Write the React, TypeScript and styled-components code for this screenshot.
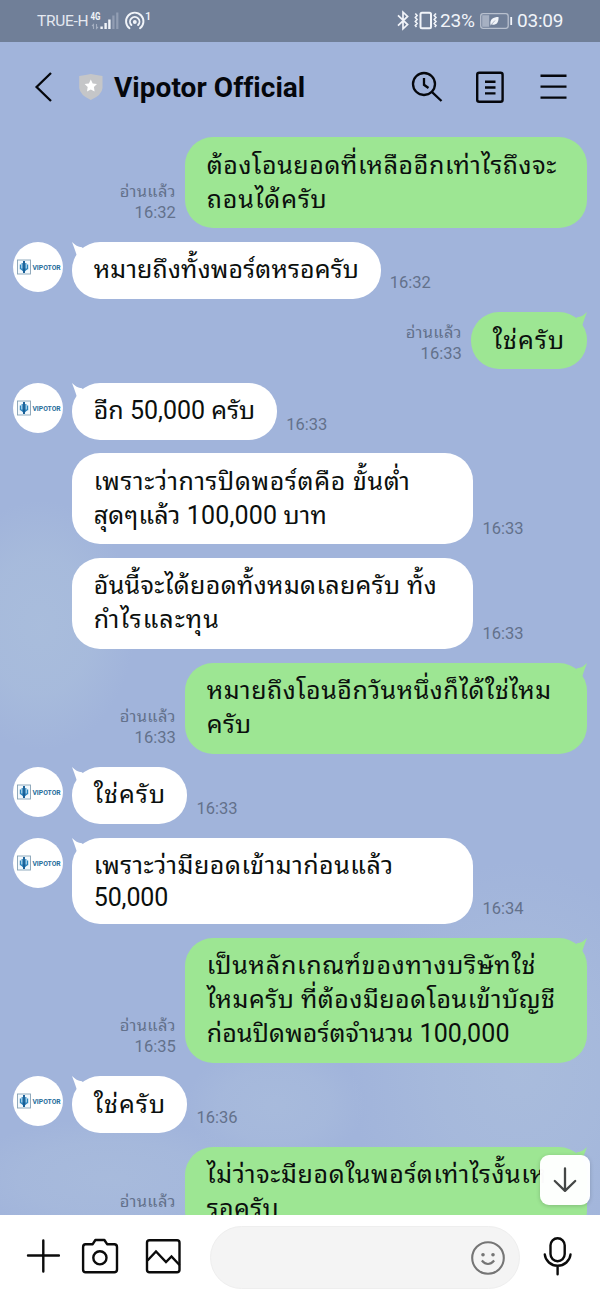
import React from 'react';
import styled, { createGlobalStyle } from 'styled-components';

const FONT =
  "Roboto, 'Noto Sans Thai Looped', 'Noto Looped Thai', 'Droid Sans Thai', Loma, Waree, Garuda, Umpush, Laksaman, sans-serif";

const GlobalStyle = createGlobalStyle`
  * { box-sizing: border-box; }
  body { margin: 0; font-family: ${FONT}; }
`;

const Screen = styled.div`
  display: flex;
  flex-direction: column;
  width: 600px;
  height: 1300px;
  overflow: hidden;
  background:
    radial-gradient(ellipse 95px 125px at 40px 625px, rgba(169, 189, 220, 0.95), rgba(169, 189, 220, 0.7) 55%, rgba(169, 189, 220, 0) 100%),
    radial-gradient(ellipse 90px 60px at 275px 1105px, rgba(168, 187, 220, 0.9), rgba(168, 187, 220, 0.6) 60%, rgba(168, 187, 220, 0) 100%),
    radial-gradient(ellipse 170px 210px at 520px 1070px, rgba(169, 188, 220, 0.95), rgba(169, 188, 220, 0.6) 50%, rgba(169, 188, 220, 0) 100%),
    radial-gradient(ellipse 150px 60px at 110px 1178px, rgba(168, 187, 220, 0.9), rgba(168, 187, 220, 0.6) 60%, rgba(168, 187, 220, 0) 100%),
    #a1b4db;
`;

const StatusBar = styled.div`
  display: flex;
  align-items: center;
  justify-content: space-between;
  flex: none;
  height: 42px;
  padding: 0 36px 1px 37px;
  background: #707f98;
  color: #f1f4f9;
`;

const StatusGroup = styled.div`
  display: flex;
  align-items: center;
`;

const Carrier = styled.span`
  width: 52px;
  font-size: 15.5px;
  letter-spacing: -0.3px;
  white-space: nowrap;
  color: #e4e8f0;
`;

const StatusText = styled.span<{ $w: number }>`
  width: ${(p) => p.$w}px;
  font-size: 19px;
  letter-spacing: -0.2px;
  white-space: nowrap;
`;

const Header = styled.header`
  display: flex;
  align-items: center;
  flex: none;
  height: 95px;
  padding: 0 32px 5px 34px;
`;

const BackIcon = styled.svg`
  flex: none;
`;

const ShieldIcon = styled.svg`
  flex: none;
  margin-left: 24px;
`;

const Title = styled.h1`
  flex: 1;
  margin: 1px 0 0 10px;
  font-size: 28px;
  line-height: 34px;
  font-weight: 700;
  letter-spacing: 0.05px;
  white-space: nowrap;
  color: #05070c;
`;

const HeaderActions = styled.div`
  display: flex;
  align-items: center;
  gap: 33px;
`;

const Messages = styled.main`
  position: relative;
  display: flex;
  flex-direction: column;
  gap: 13.57px;
  flex: 1;
  min-height: 0;
  padding: 0.3px 13.5px 0 13px;
  overflow: hidden;
`;

const Row = styled.div<{ $mine?: boolean }>`
  display: flex;
  flex: none;
  justify-content: ${(p) => (p.$mine ? 'flex-end' : 'flex-start')};
`;

const AvatarSlot = styled.div`
  flex: none;
  width: 58.7px;
`;

const Avatar = styled.div`
  display: flex;
  align-items: center;
  justify-content: center;
  width: 50px;
  height: 50px;
  border-radius: 50%;
  background: #fff;
`;

const Logo = styled.svg`
  flex: none;
  overflow: visible;
`;

const Bubble = styled.div<{ $mine?: boolean; $w: number }>`
  position: relative;
  flex: none;
  width: ${(p) => p.$w}px;
  padding: 11.3px 0 11.7px 22px;
  border-radius: 28px;
  background: ${(p) => (p.$mine ? '#9de693' : '#fff')};
`;

const Tail = styled.svg<{ $mine?: boolean }>`
  position: absolute;
  top: 0;
  ${(p) => (p.$mine ? 'right: 0; transform: scaleX(-1);' : 'left: 0;')}
`;

const Line = styled.div<{ $h: number; $ls: number }>`
  height: ${(p) => p.$h}px;
  line-height: ${(p) => p.$h}px;
  font-size: 25px;
  letter-spacing: ${(p) => p.$ls}px;
  white-space: nowrap;
  color: #0b0f0d;
`;

const Meta = styled.div<{ $mine?: boolean }>`
  align-self: flex-end;
  margin: ${(p) => (p.$mine ? '0 9px 5.4px 0' : '0 0 5.4px 9px')};
  text-align: right;
  font-size: 16.5px;
  line-height: 21px;
  white-space: nowrap;
  color: #63718b;
`;

const ReadLabel = styled.div`
  height: 21px;
  font-size: 16.5px;
  letter-spacing: 0.3px;
`;

const ScrollDown = styled.button`
  position: absolute;
  right: 10px;
  bottom: 10px;
  display: flex;
  align-items: center;
  justify-content: center;
  width: 50px;
  height: 50px;
  padding: 0;
  border: 0;
  border-radius: 9px;
  background: rgba(255, 255, 255, 0.98);
  box-shadow: 0 1px 4px rgba(0, 0, 0, 0.18);
`;

const Composer = styled.footer`
  display: flex;
  align-items: flex-start;
  flex: none;
  height: 85px;
  padding: 11px 0 0 26px;
  background: #fff;
`;

const ComposerIcons = styled.div`
  display: flex;
  align-items: center;
  gap: 21px;
  height: 60px;
  width: 184px;
`;

const GalleryIcon = styled.svg`
  margin-left: 5px;
`;

const InputPill = styled.div`
  display: flex;
  align-items: center;
  justify-content: flex-end;
  width: 310px;
  height: 63px;
  padding-right: 14px;
  border: 1px solid #eeeeee;
  border-radius: 32px;
  background: #f4f4f4;
`;

const MicButton = styled.div`
  display: flex;
  margin: 10px 0 0 22px;
`;

function BrandAvatar() {
  return (
    <Avatar>
      <Logo width="48" height="20" viewBox="-1 -1 48 20">
        <rect x="2.5" y="2" width="13" height="14" fill="#f3f9fd" stroke="#86a2b6" strokeWidth="0.9" />
        <path d="M5.4 6.6v4.6M7.2 5v7M10.8 5v7M12.6 6.600v4.600" stroke="#2a86bf" strokeWidth="1.200" />
        <path d="M4.900 10.500h8.200L9 14.200z" fill="#2a7fb8" />
        <path d="M9 3v12" stroke="#155c94" strokeWidth="1.900" />
        <text x="17.400" y="11.900" fontFamily="Roboto, sans-serif" fontWeight="700" fontSize="7.700" textLength="28.300" lengthAdjust="spacingAndGlyphs" fill="#276d9b">
          VIPOTOR
        </text>
      </Logo>
    </Avatar>
  );
}

type TextLine = { t: string; ls?: number; h?: number };
type Message = {
  mine?: boolean;
  avatar?: boolean;
  tail?: boolean;
  w: number;
  time: string;
  lines: TextLine[];
};

const WIDE = 401.8;

const messages: Message[] = [
  {
    mine: true, w: WIDE, time: '16:32',
    lines: [{ t: 'ต้องโอนยอดที่เหลืออีกเท่าไรถึงจะ', ls: 0.6 }, { t: 'ถอนได้ครับ', ls: 0.85 }],
  },
  { avatar: true, tail: true, w: 309, time: '16:32', lines: [{ t: 'หมายถึงทั้งพอร์ตหรอครับ', ls: 0.17 }] },
  { mine: true, tail: true, w: 115.8, time: '16:33', lines: [{ t: 'ใช่ครับ', ls: 1.1 }] },
  { avatar: true, tail: true, w: 205.5, time: '16:33', lines: [{ t: 'อีก 50,000 ครับ' }] },
  {
    w: WIDE, time: '16:33',
    lines: [{ t: 'เพราะว่าการปิดพอร์ตคือ ขั้นต่ำ', ls: 0.68 }, { t: 'สุดๆแล้ว 100,000 บาท', ls: 0.16 }],
  },
  {
    w: WIDE, time: '16:33',
    lines: [{ t: 'อันนี้จะได้ยอดทั้งหมดเลยครับ ทั้ง', ls: 0.35 }, { t: 'กำไรและทุน', ls: 1.05 }],
  },
  {
    mine: true, tail: true, w: WIDE, time: '16:33',
    lines: [{ t: 'หมายถึงโอนอีกวันหนึ่งก็ได้ใช่ไหม', ls: 0.52 }, { t: 'ครับ', ls: 0.3 }],
  },
  { avatar: true, tail: true, w: 115.8, time: '16:33', lines: [{ t: 'ใช่ครับ', ls: 1.1 }] },
  {
    avatar: true, tail: true, w: WIDE, time: '16:34',
    lines: [{ t: 'เพราะว่ามียอดเข้ามาก่อนแล้ว', ls: 0.52 }, { t: '50,000', ls: -0.1, h: 29.6 }],
  },
  {
    mine: true, tail: true, w: WIDE, time: '16:35',
    lines: [
      { t: 'เป็นหลักเกณฑ์ของทางบริษัทใช่', ls: 0.74 },
      { t: 'ไหมครับ ที่ต้องมียอดโอนเข้าบัญชี', ls: 0.5 },
      { t: 'ก่อนปิดพอร์ตจำนวน 100,000', ls: 0.14 },
    ],
  },
  { avatar: true, tail: true, w: 115.8, time: '16:36', lines: [{ t: 'ใช่ครับ', ls: 1.1 }] },
  {
    mine: true, tail: true, w: WIDE, time: '16:36',
    lines: [{ t: 'ไม่ว่าจะมียอดในพอร์ตเท่าไรงั้นเห', ls: 0.63 }, { t: 'รอครับ', ls: 0.4 }],
  },
];

function MessageRow({ m }: { m: Message }) {
  const bubble = (
    <Bubble $mine={m.mine} $w={m.w}>
      {m.tail && (
        <Tail $mine={m.mine} width="28" height="22" viewBox="0 0 28 22">
          <path d="M0 0C3 3 6 5.2 10 5.2L14 10L5 14L4.5 12.5C3 8 1.5 4 0 0Z" fill={m.mine ? '#9de693' : '#fff'} />
        </Tail>
      )}
      {m.lines.map((l) => (
        <Line key={l.t} $h={l.h ?? 34} $ls={l.ls ?? 0}>{l.t}</Line>
      ))}
    </Bubble>
  );
  const meta = (
    <Meta $mine={m.mine}>
      {m.mine && <ReadLabel>อ่านแล้ว</ReadLabel>}
      {m.time}
    </Meta>
  );
  return m.mine ? (
    <Row $mine>{meta}{bubble}</Row>
  ) : (
    <Row><AvatarSlot>{m.avatar && <BrandAvatar />}</AvatarSlot>{bubble}{meta}</Row>
  );
}

function StatusIconsLeft() {
  return (
    <svg width="64" height="26" viewBox="89 8 64 26" fill="none">
      <text x="90.5" y="20.3" fontFamily="Roboto, sans-serif" fontSize="10.5" fontWeight="700" textLength="10" lengthAdjust="spacingAndGlyphs" fill="#f1f4f9">4G</text>
      <path d="M93.5 29v-4.5l-1.5 1.5M96.5 24v4.5l1.5-1.5" stroke="#a5afc1" strokeWidth="1.1" />
      <path d="M101.6 29v-2.5M105.6 29v-6M109.4 29v-9.5" stroke="#f1f4f9" strokeWidth="2.4" />
      <path d="M113.4 29V15.5M117.3 29V12.5" stroke="#929eb3" strokeWidth="2.2" />
      <g stroke="#f1f4f9" strokeWidth="1.9" strokeLinecap="round">
        <path d="M129.5 28.3A8.7 8.7 0 1 1 140 28.3" />
        <path d="M131.4 25A4.7 4.7 0 1 1 138.1 25" />
        <circle cx="134.8" cy="22" r="1" fill="#f1f4f9" />
      </g>
      <text x="145" y="20" fontFamily="Roboto, sans-serif" fontSize="11" fontWeight="500" fill="#f1f4f9">1</text>
    </svg>
  );
}

function StatusIconsRight() {
  return (
    <svg width="44" height="26" viewBox="396 8 44 26" fill="none" stroke="#f1f4f9">
      <path d="M398 15.3l9.6 9.3-4.6 4.2V12.2l4.6 4.2-9.6 9.3" strokeWidth="1.7" />
      <rect x="420.5" y="12.8" width="10.5" height="15.4" rx="1.5" strokeWidth="2" />
      <path d="M415.3 13.5l1.8 2-1.8 2 1.8 2-1.8 2 1.8 2-1.8 2 1.2 1.4M436 13.5l-1.8 2 1.8 2-1.8 2 1.8 2-1.8 2 1.8 2-1.2 1.4" strokeWidth="1.6" />
    </svg>
  );
}

function Battery() {
  return (
    <svg width="38" height="26" viewBox="479 8 38 26" fill="none">
      <rect x="480.7" y="13.7" width="27.5" height="14.6" rx="2.5" stroke="#b8c0ce" strokeWidth="1.3" />
      <rect x="482.2" y="15.2" width="7" height="11.6" fill="#a6b0c2" />
      <path d="M490.5 25c-1-6 3-8 8-8 .5 5-2 8.5-6 7.5z" fill="#f1f4f9" />
      <path d="M490 26l5-5.5" stroke="#8c98ad" strokeWidth="0.7" />
      <path d="M511.2 17v8" stroke="#f1f4f9" strokeWidth="1.8" />
    </svg>
  );
}

export default function App() {
  return (
    <Screen lang="th">
      <GlobalStyle />
      <StatusBar>
        <StatusGroup>
          <Carrier>TRUE-H</Carrier>
          <StatusIconsLeft />
        </StatusGroup>
        <StatusGroup>
          <StatusIconsRight />
          <StatusText $w={39}>23%</StatusText>
          <Battery />
          <StatusText $w={47}>03:09</StatusText>
        </StatusGroup>
      </StatusBar>
      <Header>
        <BackIcon width="20" height="32" viewBox="0 0 20 32" fill="none" stroke="#05070c" strokeWidth="2.3">
          <path d="M17 2L2.6 16L17 30" />
        </BackIcon>
        <ShieldIcon width="26" height="28" viewBox="0 0 26 28">
          <path d="M1.2 3Q8 2 12.8 1Q18 2 24.5 3V15Q24 22 12.8 27Q2 22 1.2 15Z" fill="#c5c6c8" />
          <path d="M12.8 6.6l1.9 3.9 4.3.6-3.1 3 .7 4.3-3.8-2-3.8 2 .7-4.3-3.1-3 4.3-.6z" fill="#fff" />
        </ShieldIcon>
        <Title>Vipotor Official</Title>
        <HeaderActions>
          <svg width="32" height="32" viewBox="411 71 32 32" fill="none" stroke="#05070c" strokeWidth="2.3">
            <circle cx="424" cy="84" r="11" />
            <path d="M431.8 91.8L441.5 101M424 78v6.8l4.5 3.2" />
          </svg>
          <svg width="31" height="32" viewBox="476 70 31 32" fill="none" stroke="#05070c" strokeWidth="2.4">
            <rect x="477.2" y="71.8" width="25.4" height="29" rx="2" />
            <path d="M485 80.7h10.5M485 86.5h10.5M485 92.4h10.5" />
          </svg>
          <svg width="28" height="28" viewBox="540 73 28 28" fill="none" stroke="#05070c" strokeWidth="2.4">
            <path d="M540.5 75.7h26M540.5 86.6h26M540.5 97.6h26" />
          </svg>
        </HeaderActions>
      </Header>
      <Messages>
        {messages.map((m, i) => (
          <MessageRow key={i} m={m} />
        ))}
        <ScrollDown aria-label="Scroll to latest">
          <svg width="26" height="28" viewBox="0 0 26 28" fill="none" stroke="#444746" strokeWidth="2.3" strokeLinecap="round" strokeLinejoin="round">
            <path d="M13 2.5v22M2.8 15l10.2 9.8L23.2 15" />
          </svg>
        </ScrollDown>
      </Messages>
      <Composer>
        <ComposerIcons>
          <svg width="34" height="34" viewBox="0 0 34 34" stroke="#0b0b0b" strokeWidth="2.4" strokeLinecap="round">
            <path d="M2 16.5h31M17.3 1.5v31" />
          </svg>
          <svg width="38" height="36" viewBox="81 1237 38 36" fill="none" stroke="#0b0b0b" strokeWidth="2.4" strokeLinejoin="round">
            <path d="M85.5 1243.2h7.2l2.7-4.2h9l2.7 4.2h7.2q2.7 0 2.7 2.7v22.6q0 2.7-2.7 2.7h-28.8q-2.4 0-2.4-2.7v-22.6q0-2.7 2.4-2.7z" />
            <circle cx="99.9" cy="1256.8" r="6.6" />
          </svg>
          <GalleryIcon width="36" height="36" viewBox="145 1237 36 36" fill="none" stroke="#0b0b0b" strokeWidth="2.4">
            <rect x="147" y="1239.2" width="32.5" height="32" rx="2.5" />
            <path d="M147.5 1259.5L156 1250.5L166 1261L171.5 1255.5L179.5 1264" />
          </GalleryIcon>
        </ComposerIcons>
        <InputPill>
          <svg width="34" height="34" viewBox="0 0 34 34" fill="none" stroke="#757575" strokeWidth="2.1">
            <circle cx="17" cy="17" r="15.8" />
            <circle cx="12" cy="13.8" r="1.8" fill="#757575" stroke="none" />
            <circle cx="22" cy="13.8" r="1.8" fill="#757575" stroke="none" />
            <path d="M10.8 19.5Q17 26.5 23.2 19.5" />
          </svg>
        </InputPill>
        <MicButton>
          <svg width="32" height="40" viewBox="542 1236 32 40" fill="none" stroke="#0b0b0b" strokeWidth="2.4">
            <rect x="550.5" y="1238.2" width="14.2" height="23" rx="7.1" />
            <path d="M544.8 1254.5A12.9 12.3 0 0 0 570.5 1254.5M557.6 1267v7.3" strokeLinecap="round" />
          </svg>
        </MicButton>
      </Composer>
    </Screen>
  );
}
